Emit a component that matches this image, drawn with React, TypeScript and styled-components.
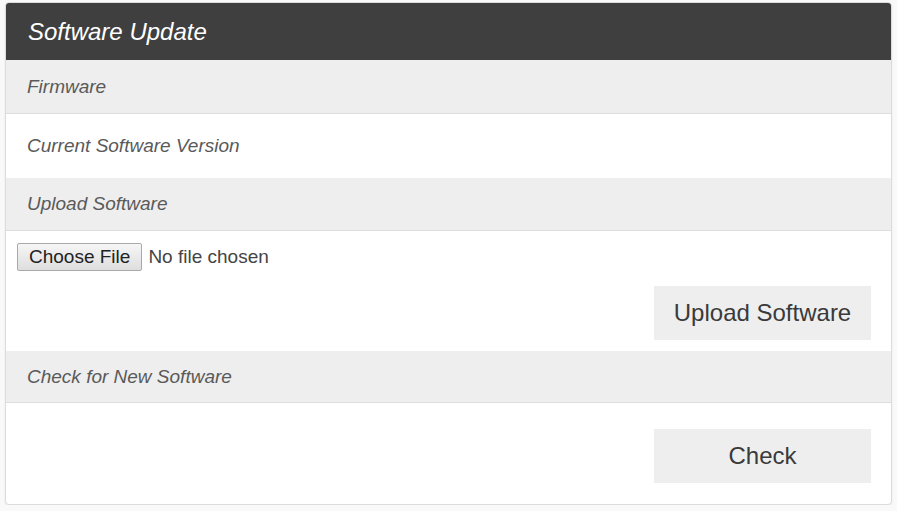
import React from 'react';
import styled, { createGlobalStyle } from 'styled-components';

const GlobalStyle = createGlobalStyle`
  body {
    margin: 0;
    background: #f9f9f9;
    font-family: "Liberation Sans", Arial, sans-serif;
  }
`;

const Panel = styled.div`
  margin: 2px 5px 0 5px;
  width: 887px;
  box-sizing: border-box;
  background: #fff;
  border: 1px solid #dcdcdc;
  border-radius: 4px;
  box-shadow: 0 1px 2px rgba(0, 0, 0, 0.08);
  overflow: hidden;
`;

const Header = styled.div`
  height: 57px;
  background: #3f3f3f;
  color: #fff;
  display: flex;
  align-items: center;
  padding: 0 22px;
  font-size: 24px;
  font-style: italic;
`;

const Row = styled.div<{ $shade?: boolean; $height: number; $line?: boolean }>`
  height: ${p => p.$height}px;
  box-sizing: border-box;
  background: ${p => (p.$shade ? '#eeeeee' : '#fff')};
  border-bottom: ${p => (p.$line ? '1px solid #dedede' : 'none')};
  display: flex;
  align-items: center;
  padding: 0 21px;
  font-size: 19px;
  font-style: italic;
  color: #5a5a5a;
`;

const Body = styled.div<{ $top: number; $bottom: number }>`
  display: flex;
  flex-direction: column;
  padding: ${p => p.$top}px 20px ${p => p.$bottom}px 11px;
`;

const FileInput = styled.input`
  font-family: "Liberation Sans", Arial, sans-serif;
  font-size: 19px;
  color: #444;
  height: 28px;
  align-self: flex-start;

  &::file-selector-button {
    font-family: "Liberation Sans", Arial, sans-serif;
    font-size: 19px;
    color: #222;
    height: 28px;
    padding: 0 11px;
    margin-right: 6px;
    border: 1px solid #a9a9a9;
    border-radius: 2px;
    background: linear-gradient(#f6f6f6, #dedede);
  }
`;

const ActionButton = styled.button<{ $gap: number }>`
  align-self: flex-end;
  margin-top: ${p => p.$gap}px;
  width: 217px;
  height: 54px;
  border: none;
  background: #eeeeee;
  color: #3a3a3a;
  font-family: "Liberation Sans", Arial, sans-serif;
  font-size: 24px;
  cursor: pointer;
`;

export default function App() {
  return (
    <>
      <GlobalStyle />
      <Panel>
        <Header>Software Update</Header>
        <Row $shade $line $height={54}>Firmware</Row>
        <Row $height={64}>Current Software Version</Row>
        <Row $shade $line $height={53}>Upload Software</Row>
        <Body $top={12} $bottom={11}>
          <FileInput type="file" />
          <ActionButton $gap={15}>Upload Software</ActionButton>
        </Body>
        <Row $shade $line $height={52}>Check for New Software</Row>
        <Body $top={26} $bottom={21}>
          <ActionButton $gap={0}>Check</ActionButton>
        </Body>
      </Panel>
    </>
  );
}
